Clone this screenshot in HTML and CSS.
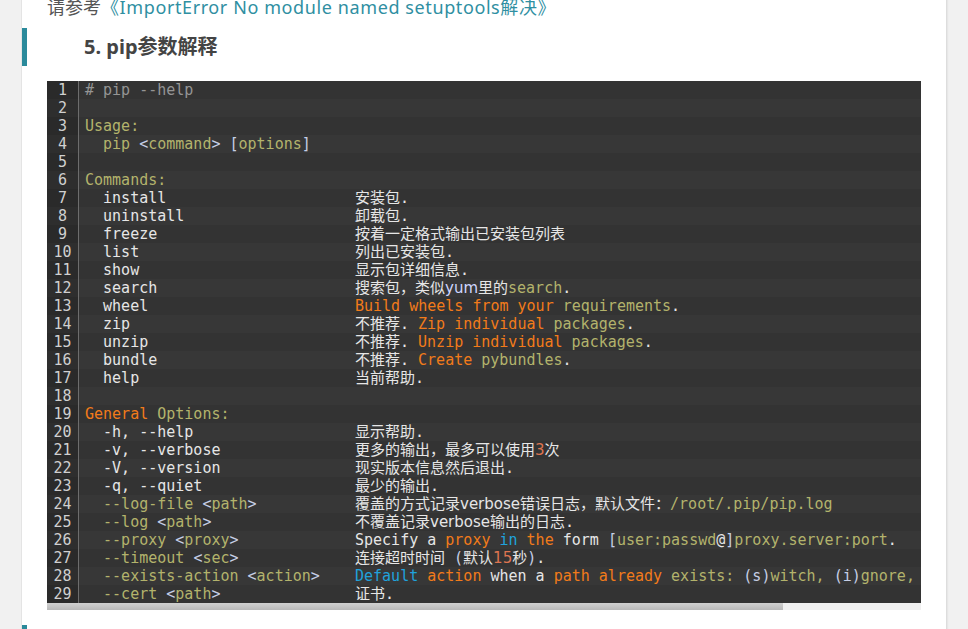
FILE: index.html
```html
<!DOCTYPE html>
<html lang="zh-CN">
<head>
    <meta charset="UTF-8">
    <meta name="viewport" content="width=device-width, initial-scale=1.0">
    <title>pip参数解释</title>
    <link rel="stylesheet" href="styles.css">
</head>
<body>

    <div class="page">
        <p class="lead">请参考<a href="#">《ImportError No module named setuptools解决》</a></p>

        <h3 class="heading">5. pip参数解释</h3>

        <div class="code">
            <div class="gutter">
                <div>1</div><div>2</div><div>3</div><div>4</div><div>5</div><div>6</div><div>7</div><div>8</div><div>9</div><div>10</div>
                <div>11</div><div>12</div><div>13</div><div>14</div><div>15</div><div>16</div><div>17</div><div>18</div><div>19</div><div>20</div>
                <div>21</div><div>22</div><div>23</div><div>24</div><div>25</div><div>26</div><div>27</div><div>28</div><div>29</div>
            </div>
            <div class="lines">
<div class="line"><span class="c"># pip --help</span></div>
<div class="line"></div>
<div class="line"><span class="k">Usage:</span></div>
<div class="line">  <span class="k">pip</span> <span class="p">&lt;</span><span class="k">command</span><span class="p">&gt;</span> <span class="p">[</span><span class="k">options</span><span class="p">]</span></div>
<div class="line"></div>
<div class="line"><span class="k">Commands:</span></div>
<div class="line"><span class="arg">  install</span>安装包.</div>
<div class="line"><span class="arg">  uninstall</span>卸载包.</div>
<div class="line"><span class="arg">  freeze</span>按着一定格式输出已安装包列表</div>
<div class="line"><span class="arg">  list</span>列出已安装包.</div>
<div class="line"><span class="arg">  show</span>显示包详细信息.</div>
<div class="line"><span class="arg">  search</span>搜索包，类似<span class="s y">yum</span>里的<span class="k">search</span>.</div>
<div class="line"><span class="arg">  wheel</span><span class="o">Build wheels from your</span> <span class="k">requirements</span>.</div>
<div class="line"><span class="arg">  zip</span>不推荐. <span class="o">Zip individual</span> <span class="k">packages</span>.</div>
<div class="line"><span class="arg">  unzip</span>不推荐. <span class="o">Unzip individual</span> <span class="k">packages</span>.</div>
<div class="line"><span class="arg">  bundle</span>不推荐. <span class="o">Create</span> <span class="k">pybundles</span>.</div>
<div class="line"><span class="arg">  help</span>当前帮助.</div>
<div class="line"></div>
<div class="line"><span class="o">General</span> <span class="k">Options:</span></div>
<div class="line"><span class="arg">  -h, --help</span>显示帮助.</div>
<div class="line"><span class="arg">  -v, --verbose</span>更多的输出，最多可以使用<span class="s n">3</span>次</div>
<div class="line"><span class="arg">  -V, --version</span>现实版本信息然后退出.</div>
<div class="line"><span class="arg">  -q, --quiet</span>最少的输出.</div>
<div class="line"><span class="arg">  <span class="k">--log-file</span> <span class="p">&lt;</span><span class="k">path</span><span class="p">&gt;</span></span>覆盖的方式记录<span class="s">verbose</span>错误日志，默认文件：<span class="k">/root/.pip/pip.log</span></div>
<div class="line"><span class="arg">  <span class="k">--log</span> <span class="p">&lt;</span><span class="k">path</span><span class="p">&gt;</span></span>不覆盖记录<span class="s">verbose</span>输出的日志.</div>
<div class="line"><span class="arg">  <span class="k">--proxy</span> <span class="p">&lt;</span><span class="k">proxy</span><span class="p">&gt;</span></span>Specify a <span class="o">proxy</span> <span class="b">in</span> <span class="o">the</span> form <span class="p">[</span><span class="k">user:passwd</span>@<span class="p">]</span><span class="k">proxy.server:port</span>.</div>
<div class="line"><span class="arg">  <span class="k">--timeout</span> <span class="p">&lt;</span><span class="k">sec</span><span class="p">&gt;</span></span>连接超时时间 <span class="p">(</span>默认<span class="s n">15</span>秒<span class="p">)</span>.</div>
<div class="line"><span class="arg">  <span class="k">--exists-action</span> <span class="p">&lt;</span><span class="k">action</span><span class="p">&gt;</span></span><span class="b">Default</span> <span class="o">action</span> when a <span class="o">path already</span> <span class="k">exists:</span> <span class="p">(s)</span><span class="k">witch,</span> <span class="p">(i)</span><span class="k">gnore,</span> <span class="p">(w)</span><span class="k">ipe,</span> <span class="p">(b)</span><span class="k">ackup</span>.</div>
<div class="line"><span class="arg">  <span class="k">--cert</span> <span class="p">&lt;</span><span class="k">path</span><span class="p">&gt;</span></span>证书.</div>
            </div>
        </div>
        <div class="scroll"><div class="thumb"></div></div>

        <h3 class="heading next">6. pip常用命令</h3>
    </div>

</body>
</html>
```

FILE: styles.css
```css
* {
    box-sizing: border-box;
    margin: 0;
    padding: 0;
}

body {
    background-color: #f1f1f1;
    font-family: "Noto Sans", "Noto Sans CJK SC", sans-serif;
    overflow: hidden;
}

.page {
    margin-left: 22px;
    width: 924px;
    min-height: 100vh;
    padding: 0 25px;
    background-color: #fff;
    box-shadow: 1px 0 2px rgba(0, 0, 0, 0.12), -1px 0 0 #e6e6e6;
}

.lead {
    margin-top: -6px;
    font-size: 18px;
    line-height: 26px;
    color: #555;
}

.lead a {
    color: #2f8fa2;
    text-decoration: none;
    letter-spacing: 0.6px;
}

.heading {
    margin: 8px 0 15px -25px;
    border-left: 5px solid #2b8a9b;
    padding-left: 57px;
    font-size: 20px;
    font-weight: 700;
    line-height: 38px;
    color: #444;
}

.heading.next {
    margin-top: 15px;
    padding-top: 12px;
}

/* code block */

.code {
    display: flex;
    background-color: #333;
    overflow: hidden;
    font-family: "DejaVu Sans Mono", "Noto Sans CJK SC", monospace;
    font-size: 15px;
    line-height: 18px;
}

.gutter {
    flex: none;
    width: 32px;
    border-right: 1px solid #6d6d6d;
    color: #d0d0d0;
    text-align: center;
}

.gutter div {
    height: 18px;
    background-color: #2a2a2a;
}

.gutter div:nth-child(even) {
    background-color: #2e2e2e;
}

.lines {
    flex: 1;
    min-width: 0;
}

.line {
    height: 18px;
    padding-left: 6px;
    white-space: pre;
    color: #e6e6e6;
    background-color: #333;
}

.line:nth-child(even) {
    background-color: #373737;
}

.arg {
    display: inline-block;
    width: 270px;
    vertical-align: top;
}

.c { color: #959595; }
.k { color: #b3b36c; }
.o { color: #f27b1a; }
.b { color: #20a2dc; }
.p { color: #c6cfe6; }
.s { font-family: "DejaVu Sans", "Noto Sans CJK SC", sans-serif; }
.y { color: #cfd6ff; }
.n { color: #dd7450; }

.scroll {
    height: 7px;
    background-color: #f0f0f0;
}

.thumb {
    width: 736px;
    height: 100%;
    background: linear-gradient(#d0d0d0, #b9b9b9);
}
```
